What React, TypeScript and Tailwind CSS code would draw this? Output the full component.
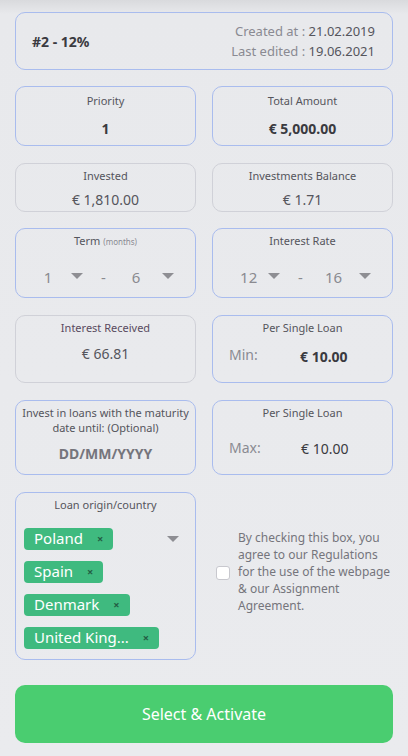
import React from "react";

const font = { fontFamily: '"Noto Sans", "Open Sans", sans-serif' };

function Caret({ className = "" }: { className?: string }) {
  return (
    <svg width="12" height="7" viewBox="0 0 12 7" className={className}>
      <path d="M0 0 L12 0 L6 6 Z" fill="#8e8e93" />
    </svg>
  );
}

function Tag({ label }: { label: string }) {
  return (
    <div className="flex items-center h-[22px] rounded-[4px] bg-[#3fba7f] pl-[10px] pr-[10px] self-start">
      <span className="text-white text-[15px] leading-none">{label}</span>
      <span className="ml-[14px] text-[#245f45] text-[11px] font-bold leading-none">×</span>
    </div>
  );
}

function Sel({ a, b }: { a: string; b: string }) {
  return (
    <div className="flex items-center justify-center mt-[16px] pl-[6px] text-[15px] text-[#8a8a90]">
      <span className="w-[10px] text-center">{a}</span>
      <Caret className="ml-[18px]" />
      <span className="ml-[18px]">-</span>
      <span className="ml-[22px] w-[16px] text-center">{b}</span>
      <Caret className="ml-[18px]" />
    </div>
  );
}

export default function App() {
  return (
    <div
      style={font}
      className="w-[408px] h-[756px] overflow-hidden bg-[linear-gradient(to_bottom,#d9dadd_0px,#e8e9ec_14px,#eaebee_100%)] px-[15px] pt-[12px] text-[#4a4a50]"
    >
      {/* Header */}
      <div className="h-[58px] rounded-[10px] border border-[#a9bcee] flex items-center justify-between pl-[16px] pr-[17px]">
        <span className="font-bold text-[14px] text-[#3a3a40]">#2 - 12%</span>
        <div className="flex flex-col items-end text-[13px] leading-[20px] text-[#8a8a92]">
          <span>
            Created at : <span className="text-[#55555c]">21.02.2019</span>
          </span>
          <span>
            Last edited : <span className="text-[#55555c]">19.06.2021</span>
          </span>
        </div>
      </div>

      {/* Row 1 */}
      <div className="grid grid-cols-2 gap-[16px] mt-[16px]">
        <div className="h-[60px] rounded-[10px] border border-[#a9bcee] flex flex-col items-center pt-[6px]">
          <span className="text-[11px] text-[#55555c]">Priority</span>
          <span className="mt-[8px] text-[14px] font-bold text-[#3a3a40]">1</span>
        </div>
        <div className="h-[60px] rounded-[10px] border border-[#a9bcee] flex flex-col items-center pt-[6px]">
          <span className="text-[11px] text-[#55555c]">Total Amount</span>
          <span className="mt-[8px] text-[14px] font-bold text-[#3a3a40]">€ 5,000.00</span>
        </div>
      </div>

      {/* Row 2 */}
      <div className="grid grid-cols-2 gap-[16px] mt-[17px]">
        <div className="h-[49px] rounded-[10px] border border-[#d0d1d8] flex flex-col items-center pt-[4px]">
          <span className="text-[11px] text-[#55555c]">Invested</span>
          <span className="mt-[4px] text-[14px] text-[#55555c]">€ 1,810.00</span>
        </div>
        <div className="h-[49px] rounded-[10px] border border-[#d0d1d8] flex flex-col items-center pt-[4px]">
          <span className="text-[11px] text-[#55555c]">Investments Balance</span>
          <span className="mt-[4px] text-[14px] text-[#55555c]">€ 1.71</span>
        </div>
      </div>

      {/* Row 3 */}
      <div className="grid grid-cols-2 gap-[16px] mt-[16px]">
        <div className="h-[70px] rounded-[10px] border border-[#a9bcee] flex flex-col items-center pt-[4px]">
          <span className="text-[11px] text-[#55555c]">
            Term <span className="text-[8px] text-[#8a8a92]">(months)</span>
          </span>
          <Sel a="1" b="6" />
        </div>
        <div className="h-[70px] rounded-[10px] border border-[#a9bcee] flex flex-col items-center pt-[4px]">
          <span className="text-[11px] text-[#55555c]">Interest Rate</span>
          <Sel a="12" b="16" />
        </div>
      </div>

      {/* Row 4 */}
      <div className="grid grid-cols-2 gap-[16px] mt-[17px]">
        <div className="h-[68px] rounded-[10px] border border-[#d0d1d8] flex flex-col items-center pt-[4px]">
          <span className="text-[11px] text-[#5a4a60]">Interest Received</span>
          <span className="mt-[6px] text-[14px] text-[#55555c]">€ 66.81</span>
        </div>
        <div className="h-[68px] rounded-[10px] border border-[#a9bcee] flex flex-col pt-[4px]">
          <span className="text-[11px] text-[#55555c] text-center">Per Single Loan</span>
          <div className="flex items-center mt-[6px] pl-[16px]">
            <span className="text-[14px] text-[#8a8a92] w-[71px]">Min:</span>
            <span className="text-[14px] font-bold text-[#3a3a40] mt-[3px]">€ 10.00</span>
          </div>
        </div>
      </div>

      {/* Row 5 */}
      <div className="grid grid-cols-2 gap-[16px] mt-[17px]">
        <div className="h-[75px] rounded-[10px] border border-[#a9bcee] flex flex-col items-center pt-[4px]">
          <span className="text-[11px] leading-[15px] text-[#55555c] text-center px-[6px]">
            Invest in loans with the maturity date until: (Optional)
          </span>
          <span className="mt-[8px] text-[14px] font-bold text-[#75757c]">DD/MM/YYYY</span>
        </div>
        <div className="h-[75px] rounded-[10px] border border-[#a9bcee] flex flex-col pt-[4px]">
          <span className="text-[11px] text-[#55555c] text-center">Per Single Loan</span>
          <div className="flex items-center mt-[15px] pl-[16px]">
            <span className="text-[14px] text-[#8a8a92] w-[72px]">Max:</span>
            <span className="text-[14px] text-[#3a3a40] mt-[1px]">€ 10.00</span>
          </div>
        </div>
      </div>

      {/* Row 6 */}
      <div className="grid grid-cols-2 gap-[16px] mt-[17px]">
        <div className="h-[168px] rounded-[10px] border border-[#a9bcee] flex flex-col pt-[4px]">
          <span className="text-[11px] text-[#55555c] text-center">Loan origin/country</span>
          <div className="relative flex flex-col gap-[11px] mt-[14px] pl-[8px]">
            <Tag label="Poland" />
            <Tag label="Spain" />
            <Tag label="Denmark" />
            <Tag label="United King..." />
            <Caret className="absolute right-[16px] top-[8px]" />
          </div>
        </div>
        <div className="flex items-center pb-[10px]">
          <div className="w-[14px] h-[14px] rounded-[3px] border border-[#c8c8ce] bg-white shrink-0 ml-[4px] mt-[4px]" />
          <p className="ml-[8px] text-[12px] leading-[17px] text-[#75757c]">
            By checking this box, you agree to our Regulations for the use of the webpage &amp; our Assignment Agreement.
          </p>
        </div>
      </div>

      {/* Button */}
      <button className="mt-[25px] w-full h-[58px] rounded-[10px] bg-[#4acd70] text-white text-[16px]">
        Select &amp; Activate
      </button>
    </div>
  );
}
